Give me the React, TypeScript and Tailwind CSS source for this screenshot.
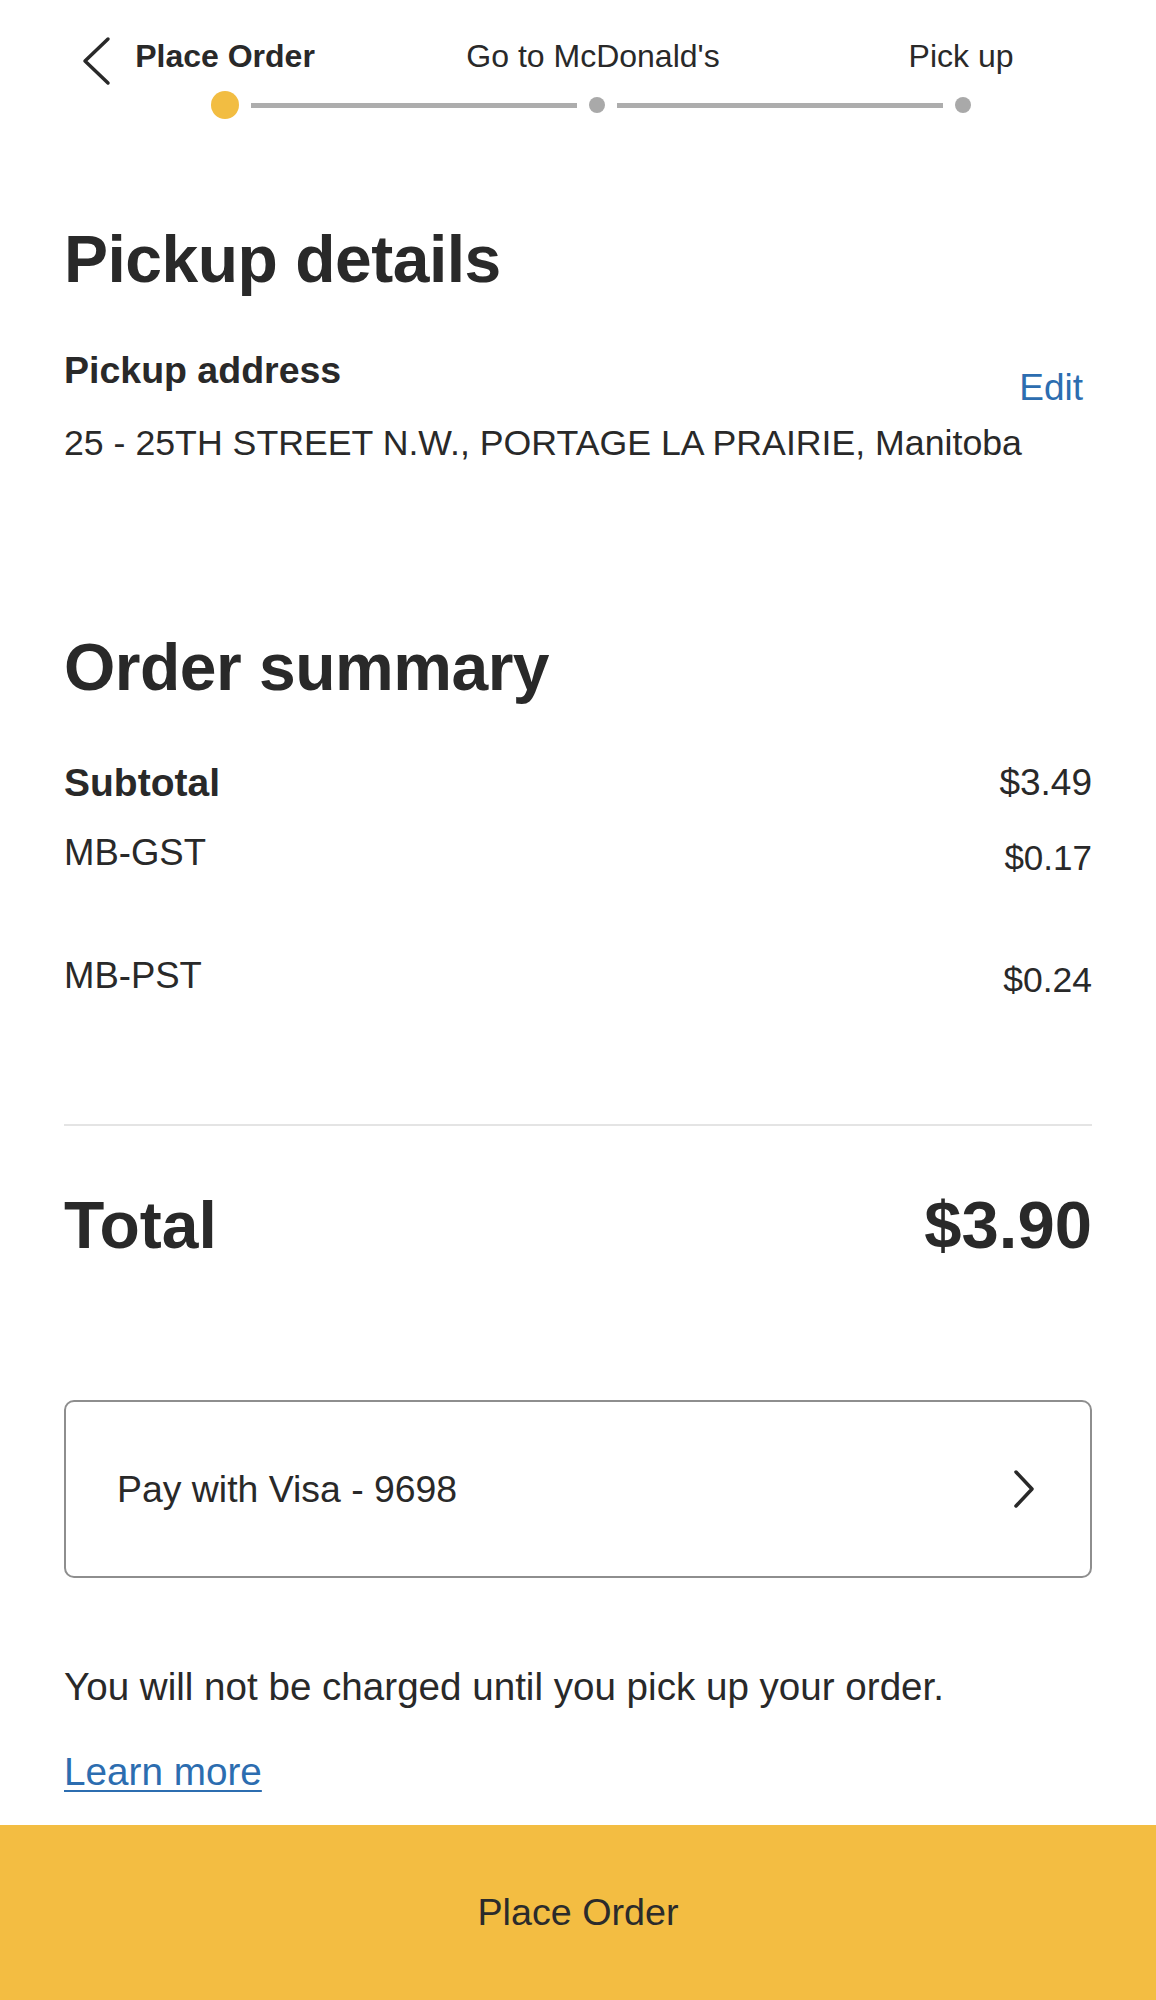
export default function App() {
  return (
    <div className="w-[1156px] h-[2000px] bg-white text-[#292929] flex flex-col font-['Liberation_Sans',Arial,sans-serif] overflow-hidden">
      <header className="relative pt-[40px]">
        <svg
          className="absolute left-[81px] top-[36px]"
          width="30"
          height="50"
          viewBox="0 0 30 50"
          fill="none"
        >
          <path d="M27 3 L4 25 L27 47" stroke="#292929" strokeWidth="3.5" strokeLinecap="round" strokeLinejoin="round" />
        </svg>
        <div className="grid grid-cols-3 pl-[41px] pr-[11px] text-[32px] leading-none">
          <div className="text-center font-bold">Place Order</div>
          <div className="text-center">Go to McDonald's</div>
          <div className="text-center">Pick up</div>
        </div>
        <div className="mt-[19px] flex items-center h-[28px]">
          <div className="ml-[211px] w-[28px] h-[28px] rounded-full bg-[#f2bd42]" />
          <div className="ml-[12px] w-[326px] h-[5px] bg-[#adadad]" />
          <div className="ml-[12px] w-[16px] h-[16px] rounded-full bg-[#a9a9a9]" />
          <div className="ml-[12px] w-[326px] h-[5px] bg-[#adadad]" />
          <div className="ml-[12px] w-[16px] h-[16px] rounded-full bg-[#a9a9a9]" />
        </div>
      </header>

      <main className="px-16 flex flex-col">
        <h1 className="mt-[107px] text-[66px] leading-none font-bold tracking-[-0.5px]">Pickup details</h1>

        <div className="mt-[60px] flex justify-between items-start">
          <div className="text-[37.5px] leading-none font-bold">Pickup address</div>
          <button className="mt-[17px] mr-[9px] text-[37px] leading-none text-[#2c6db0]">Edit</button>
        </div>
        <p className="mt-[20px] text-[35.7px] leading-none">25 - 25TH STREET N.W., PORTAGE LA PRAIRIE, Manitoba</p>

        <h2 className="mt-[172px] text-[66px] leading-none font-bold tracking-[-0.5px]">Order summary</h2>

        <div className="mt-[63px] flex justify-between items-center leading-none">
          <span className="font-bold text-[39px]">Subtotal</span>
          <span className="text-[37px]">$3.49</span>
        </div>
        <div className="mt-[33px] flex justify-between items-start text-[36.5px] leading-none">
          <span>MB-GST</span>
          <span className="mt-[5px] text-[35px]">$0.17</span>
        </div>
        <div className="mt-[83px] flex justify-between items-start text-[36.5px] leading-none">
          <span>MB-PST</span>
          <span className="mt-[5px] text-[35.5px]">$0.24</span>
        </div>

        <div className="mt-[126px] h-[2px] bg-[#e4e4e4]" />

        <div className="mt-[65px] flex justify-between items-center leading-none font-bold">
          <span className="text-[66px]">Total</span>
          <span className="text-[67px]">$3.90</span>
        </div>

        <button className="mt-[142px] h-[178px] w-full rounded-[10px] border-2 border-[#8e8e8e] flex items-center justify-between pl-[51px] pr-[54px]">
          <span className="text-[37.4px] leading-none">Pay with Visa - 9698</span>
          <svg width="24" height="40" viewBox="0 0 24 40" fill="none">
            <path d="M4 3 L20 20 L4 37" stroke="#292929" strokeWidth="3.5" strokeLinecap="round" strokeLinejoin="round" />
          </svg>
        </button>

        <p className="mt-[90px] text-[38.6px] leading-none">You will not be charged until you pick up your order.</p>
        <a href="#" className="mt-[46px] self-start text-[38.7px] leading-none text-[#2c6db0] underline underline-offset-[5px] decoration-2">
          Learn more
        </a>
      </main>

      <div className="mt-auto h-[175px] bg-[#f3bd42] flex items-center justify-center">
        <span className="text-[37.7px] leading-none text-[#2b2b2b]">Place Order</span>
      </div>
    </div>
  );
}
